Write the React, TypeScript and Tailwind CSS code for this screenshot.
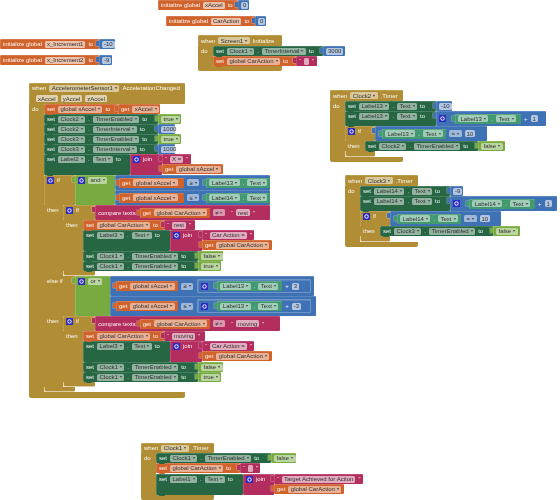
import type { ReactNode } from "react";

const GOLD = "bg-[#b18e35]";
const ORANGE = "bg-[#d0622c]";
const GREEN = "bg-[#266643]";
const LABEL = "bg-[#439970]";
const BLUE = "bg-[#3f71b5]";
const MAG = "bg-[#b32d5e]";
const BOOL = "bg-[#77ab41]";
const IF_FOOT = "rounded-b-[2px] shadow-[inset_0.7px_-0.7px_0_rgba(255,255,255,0.75)]";

const T = ({ children }: { children: ReactNode }) => <span className="shrink-0 text-white/95">{children}</span>;

// field with a dropdown arrow
const D = ({ children }: { children: ReactNode }) => (
  <span className="flex h-[7px] shrink-0 items-center gap-[2px] rounded-[1.5px] bg-white/50 px-[2.5px] text-[#333]">
    {children}
    <span className="text-[4px] text-[#444]">▾</span>
  </span>
);

// plain editable field
const F = ({ children }: { children?: ReactNode }) => (
  <span className="flex h-[7px] min-w-[5px] shrink-0 items-center rounded-[1.5px] bg-white/60 px-[2px] text-[#333]">{children}</span>
);

const Gear = () => (
  <svg viewBox="0 0 8 8" className="h-[7px] w-[7px] shrink-0">
    <rect width="8" height="8" rx="1" fill="#2b2bc4" />
    <circle cx="4" cy="4" r="2" fill="none" stroke="#fff" strokeWidth="1.1" />
  </svg>
);

function Blk({ className, inner = "h-[10px]", tab, children }: { className: string; inner?: string; tab?: string; children?: ReactNode }) {
  return (
    <div className={`relative shrink-0 rounded-[1px] shadow-[inset_0.5px_0.5px_0_rgba(255,255,255,0.3)] ${className}`}>
      <div className={`flex items-center gap-[3px] px-[3px] ${inner}`}>{children}</div>
      {tab && <div className={`absolute -bottom-[1px] left-[3px] z-10 h-[2px] w-[6px] rounded-b-[1px] ${tab}`} />}
    </div>
  );
}

function Val({ color, className, inner, children }: { color: string; className: string; inner?: string; children?: ReactNode }) {
  return (
    <div className="relative z-10 shrink-0">
      <div className={`absolute -left-[3px] top-[2px] h-[5px] w-[3px] shadow-[0_0_0_0.4px_rgba(255,255,255,0.5)] ${color}`} />
      <Blk className={`${color} ${className}`} inner={inner}>{children}</Blk>
    </div>
  );
}

const Row = ({ children }: { children: ReactNode }) => <div className="flex items-start">{children}</div>;

const SetProp = ({ c, p, w, h = "h-[10px]" }: { c: string; p: string; w: string; h?: string }) => (
  <Blk className={`${GREEN} ${w} ${h}`} tab={GREEN}>
    <T>set</T><D>{c}</D><T>.</T><D>{p}</D><T>to</T>
  </Blk>
);

const SetVar = ({ name, w }: { name: string; w: string }) => (
  <Blk className={`${ORANGE} ${w}`} tab={ORANGE}>
    <T>set</T><D>{name}</D><T>to</T>
  </Blk>
);

const Get = ({ name, w }: { name: string; w: string }) => (
  <Val color={ORANGE} className={w}><T>get</T><D>{name}</D></Val>
);

const Str = ({ text, w }: { text?: string; w: string }) => (
  <Val color={MAG} className={w}><T>“</T><F>{text}</F><T>”</T></Val>
);

const Num = ({ n, w }: { n: string; w: string }) => (
  <Val color={BLUE} className={w}><F>{n}</F></Val>
);

const Bool = ({ v, w }: { v: string; w: string }) => (
  <Val color={BOOL} className={w}><D>{v}</D></Val>
);

const Prop = ({ c, w }: { c: string; w: string }) => (
  <Val color={LABEL} className={w}><D>{c}</D><T>.</T><D>Text</D></Val>
);

const Init = ({ name, pos, w, n, nw }: { name: string; pos: string; w: string; n: string; nw: string }) => (
  <div className={`absolute flex ${pos}`}>
    <Blk className={`${ORANGE} ${w}`}><T>initialize global</T><F>{name}</F><T>to</T></Blk>
    <Num n={n} w={nw} />
  </div>
);

function Hat({ pos, w, head, foot = "h-[5px]", children }: { pos: string; w: string; head: ReactNode; foot?: string; children: ReactNode }) {
  return (
    <div className={`absolute flex flex-col ${pos}`}>
      {head}
      <div className="flex">
        <div className={`${GOLD} w-[15px] shrink-0 pl-[3px] pt-[2px]`}><T>do</T></div>
        <div className="flex flex-col">{children}</div>
      </div>
      <div className={`${GOLD} ${w} ${foot} rounded-b-[2px]`} />
    </div>
  );
}

const CmpRow = ({ label, op }: { label: string; op: string }) => (
  <Row>
    <Blk className={`${BLUE} h-[15px] w-[155px]`} inner="h-[15px]">
      <div className="ml-[1px] flex gap-[2px]">
        <Get name="global xAccel" w="w-[65px]" />
        <span className="ml-[1px] flex h-[10px] items-center"><D>{op}</D></span>
      </div>
      <div className="ml-[4px]">
        <Prop c={label} w="w-[64px]" />
      </div>
    </Blk>
  </Row>
);

const MathRow = ({ op, n, w }: { op: string; n: string; w: string }) => (
  <Blk className={`${BLUE} ${w} h-[20px]`} inner="h-[20px]">
    <div className="ml-[3px] flex gap-[2px]">
      <Get name="global xAccel" w="w-[62px]" />
      <span className="ml-[1px] flex h-[10px] items-center"><D>{op}</D></span>
    </div>
    <Blk className="ml-[1px] h-[14px] w-[114px] border border-white/25" inner="h-[12px]">
      <Gear />
      <div className="ml-[6px]"><Prop c="Label13" w="w-[65px]" /></div>
      <T>+</T>
      <F>{n}</F>
    </Blk>
  </Blk>
);

// the nested "if compare texts" that sits in both branches of the accelerometer handler
function Branch({ cmp, cmpGap, strW, str }: { cmp: string; cmpGap: string; strW: string; str: string }) {
  return (
    <div className="flex">
      <div className={`${GOLD} w-[19px] shrink-0 pl-[3px] pt-[2px]`}><T>then</T></div>
      <div className="flex flex-col">
        <Row>
          <Blk className={`${GOLD} h-[15px] w-[32px]`}><Gear /><T>if</T></Blk>
          <Val color={MAG} className={`${cmp} h-[15px]`} inner="h-[15px]">
            <div className="flex h-[15px] items-center gap-[3px]">
              <T>compare texts</T>
              <div className="ml-[1px]"><Get name="global CarAction" w="w-[70px]" /></div>
              <D>≠</D>
              <span className={cmpGap}><T>“</T></span><F>{str}</F><T>”</T>
            </div>
          </Val>
        </Row>
        <div className="flex">
          <div className={`${GOLD} w-[20px] shrink-0 pl-[3px] pt-[2px]`}><T>then</T></div>
          <div className="flex flex-col">
            <Row>
              <SetVar name="global CarAction" w="w-[81px]" />
              <Str text={str} w={strW} />
            </Row>
            <Row>
              <SetProp c="Label3" p="Text" w="w-[87px]" h="h-[21px]" />
              <Blk className={`${MAG} h-[21px] w-[32px]`}><Gear /><T>join</T></Blk>
              <div className="flex flex-col">
                <Str text="Car Action =" w="w-[52px]" />
                <Get name="global CarAction" w="w-[70px]" />
              </div>
            </Row>
            <Row>
              <SetProp c="Clock1" p="TimerEnabled" w="w-[115px]" />
              <Bool v="false" w="w-[25px]" />
            </Row>
            <Row>
              <SetProp c="Clock1" p="TimerEnabled" w="w-[115px]" />
              <Bool v="true" w="w-[23px]" />
            </Row>
          </div>
        </div>
        <div className={`${GOLD} ${IF_FOOT} h-[5px] w-[32px]`} />
      </div>
    </div>
  );
}

function TimerStack({ pos, clock, label, n, nw, row1, row2, mathW, cmpW, thenW, boolW }: {
  pos: string; clock: string; label: string; n: string; nw: string; row1: string; row2: string; mathW: string; cmpW: string; thenW: string; boolW: string;
}) {
  return (
    <Hat
      pos={pos}
      w="w-[73px]"
      foot="h-[5px]"
      head={<Blk className={`${GOLD} h-[11px] w-[73px]`} inner="h-[11px]"><T>when</T><D>{clock}</D><T>.Timer</T></Blk>}
    >
      <Row>
        <SetProp c={label} p="Text" w={row1} />
        <Num n={n} w={nw} />
      </Row>
      <Row>
        <SetProp c={label} p="Text" w={`${row2} h-[15px]`} />
        <Val color={BLUE} className={`${mathW} h-[15px]`} inner="h-[15px]">
          <Gear />
          <div className="ml-[6px]"><Prop c={label} w="w-[66px]" /></div>
          <T>+</T>
          <F>1</F>
        </Val>
      </Row>
      <Row>
        <Blk className={`${GOLD} h-[15px] w-[30px]`}><Gear /><T>if</T></Blk>
        <Val color={BLUE} className={`${cmpW} h-[15px]`} inner="h-[15px]">
          <div className="ml-[4px]"><Prop c={label} w="w-[64px]" /></div>
          <D>=</D>
          <F>10</F>
        </Val>
      </Row>
      <Row>
        <div className={`${GOLD} h-[10px] w-[20px] shrink-0 pl-[3px] pt-[2px]`}><T>then</T></div>
        <SetProp c={clock} p="TimerEnabled" w={thenW} />
        <Bool v="false" w={boolW} />
      </Row>
      <div className={`${GOLD} ${IF_FOOT} h-[6px] w-[30px]`} />
    </Hat>
  );
}

export default function App() {
  return (
    <div className="relative h-[500px] w-[560px] overflow-hidden bg-white font-['Liberation_Sans',sans-serif] text-[6px] leading-none blur-[0.4px]">
      <Init name="xAccel" pos="left-[158px] top-0" w="w-[80px]" n="0" nw="w-[11px]" />
      <Init name="CarAction" pos="left-[166px] top-[16px]" w="w-[89px]" n="0" nw="w-[11px]" />
      <Init name="x_Increment1" pos="left-0 top-[39px]" w="w-[99px]" n="-10" nw="w-[16px]" />
      <Init name="x_Increment2" pos="left-0 top-[55px]" w="w-[99px]" n="-9" nw="w-[13px]" />

      <Hat
        pos="left-[198px] top-[35px]"
        w="w-[84px]"
        head={<Blk className={`${GOLD} h-[11px] w-[84px]`} inner="h-[11px]"><T>when</T><D>Screen1</D><T>Initialize</T></Blk>}
      >
        <Row>
          <SetProp c="Clock1" p="TimerInterval" w="w-[110px]" />
          <Num n="3000" w="w-[22px]" />
        </Row>
        <Row>
          <SetVar name="global CarAction" w="w-[83px]" />
          <Str w="w-[21px]" />
        </Row>
      </Hat>

      <Hat
        pos="left-[29px] top-[83px]"
        w="w-[156px]"
        foot="h-[6px]"
        head={
          <Blk className={`${GOLD} h-[21px] w-[156px]`} inner="h-[21px] !flex-col !items-start !gap-0">
            <div className="flex h-[10px] items-center gap-[3px]"><T>when</T><D>AccelerometerSensor1</D><T>AccelerationChanged</T></div>
            <div className="flex h-[11px] items-center gap-[3px] pl-[4px]"><F>xAccel</F><F>yAccel</F><F>zAccel</F></div>
          </Blk>
        }
      >
        <Row>
          <SetVar name="global xAccel" w="w-[74px]" />
          <Get name="xAccel" w="w-[42px]" />
        </Row>
        <Row>
          <SetProp c="Clock2" p="TimerEnabled" w="w-[114px]" />
          <Bool v="true" w="w-[23px]" />
        </Row>
        <Row>
          <SetProp c="Clock2" p="TimerInterval" w="w-[114px]" />
          <Num n="1000" w="w-[17px]" />
        </Row>
        <Row>
          <SetProp c="Clock3" p="TimerEnabled" w="w-[114px]" />
          <Bool v="true" w="w-[23px]" />
        </Row>
        <Row>
          <SetProp c="Clock3" p="TimerInterval" w="w-[114px]" />
          <Num n="1000" w="w-[17px]" />
        </Row>
        <Row>
          <SetProp c="Label2" p="Text" w="w-[86px]" h="h-[21px]" />
          <Blk className={`${MAG} h-[21px] w-[32px]`}><Gear /><T>join</T></Blk>
          <div className="flex flex-col">
            <Str text="X =" w="w-[29px]" />
            <Get name="global xAccel" w="w-[61px]" />
          </div>
        </Row>

        <Row>
          <Blk className={`${GOLD} h-[30px] w-[31px]`}><Gear /><T>if</T></Blk>
          <Val color={BOOL} className="h-[30px] w-[40px]"><Gear /><D>and</D></Val>
          <div className="flex flex-col">
            <CmpRow label="Label13" op="≥" />
            <CmpRow label="Label14" op="≤" />
          </div>
        </Row>
        <Branch cmp="w-[175px]" cmpGap="ml-[3px]" strW="w-[31px]" str="rest" />
        <Row>
          <div className={`${GOLD} flex h-[40px] w-[31px] shrink-0 gap-[1px] pl-[3px] pt-[2px]`}><T>else if</T></div>
          <Val color={BOOL} className="h-[40px] w-[35px]"><Gear /><D>or</D></Val>
          <div className="flex flex-col">
            <MathRow op="≥" n="3" w="w-[204px]" />
            <MathRow op="≤" n="-3" w="w-[206px]" />
          </div>
        </Row>
        <Branch cmp="w-[185px]" cmpGap="ml-[3px]" strW="w-[41px]" str="moving" />
        <div className={`${GOLD} ${IF_FOOT} h-[5px] w-[31px]`} />
      </Hat>

      <TimerStack pos="left-[330px] top-[90px]" clock="Clock2" label="Label13" n="-10" nw="w-[16px]" row1="w-[91px]" row2="w-[91px]" mathW="w-[110px]" cmpW="w-[112px]" thenW="w-[113px]" boolW="w-[27px]" />
      <TimerStack pos="left-[345px] top-[175px]" clock="Clock3" label="Label14" n="-9" nw="w-[13px]" row1="w-[90px]" row2="w-[90px]" mathW="w-[107px]" cmpW="w-[111px]" thenW="w-[113px]" boolW="w-[27px]" />

      <Hat
        pos="left-[141px] top-[443px]"
        w="w-[73px]"
        head={<Blk className={`${GOLD} h-[10px] w-[73px]`}><T>when</T><D>Clock1</D><T>.Timer</T></Blk>}
      >
        <Row>
          <SetProp c="Clock1" p="TimerEnabled" w="w-[115px]" />
          <Bool v="false" w="w-[25px]" />
        </Row>
        <Row>
          <SetVar name="global CarAction" w="w-[84px]" />
          <Str w="w-[20px]" />
        </Row>
        <Row>
          <SetProp c="Label1" p="Text" w="w-[87px]" h="h-[21px] mt-[1px]" />
          <Blk className={`${MAG} mt-[1px] h-[21px] w-[31px]`}><Gear /><T>join</T></Blk>
          <div className="mt-[1px] flex flex-col">
            <Str text="Target Achieved for Action" w="w-[89px]" />
            <Get name="global CarAction" w="w-[70px]" />
          </div>
        </Row>
      </Hat>
    </div>
  );
}
